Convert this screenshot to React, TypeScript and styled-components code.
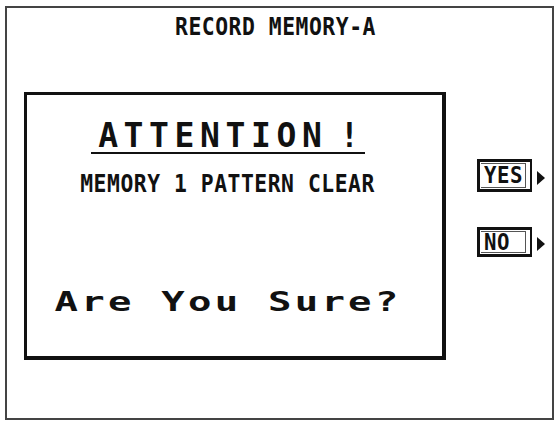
import React from "react";
import styled, { createGlobalStyle } from "styled-components";

const Global = createGlobalStyle`
body{
  margin:0;
  background:#fff;
}
`
const Screen = styled.div`
margin:6px 0 0 5px;
width:549px;
height:414px;
box-sizing:border-box;
border:2px solid #444;
display:flex;
flex-direction:column;
color:#111;
font-family:"DejaVu Sans Mono",monospace;
`
const Title = styled.div`
padding:7px 9px 0 0;
font-size:24px;
font-weight:700;
line-height:1;
letter-spacing:0.6px;
text-align:center;
transform:scaleX(0.89);
`
const Body = styled.div`
display:flex;
margin-top:53px;
padding-left:17px;
`
const Dialog = styled.div`
width:422px;
height:268px;
box-sizing:border-box;
border-style:solid;
border-color:#111;
border-width:3px 4px 4px 3px;
padding-right:13px;
display:flex;
flex-direction:column;
align-items:center;
`
const Heading = styled.div`
margin-top:24px;
padding-left:7px;
font-size:33px;
font-weight:700;
line-height:1;
letter-spacing:5.6px;
border-bottom:2px solid #111;
white-space:nowrap;
`
const Bang = styled.span`
margin-left:12px;
`
const Message = styled.div`
margin-top:18px;
font-size:24px;
font-weight:700;
line-height:1;
letter-spacing:0.6px;
white-space:nowrap;
transform:scaleX(0.89);
`
const Question = styled.div`
margin-top:93px;
font-size:26.5px;
font-weight:700;
line-height:1;
letter-spacing:2.2px;
white-space:nowrap;
transform:scaleX(1.47);
`
const Choices = styled.div`
display:flex;
flex-direction:column;
gap:35px;
padding-top:67px;
margin-left:31px;
`
const Choice = styled.div`
display:flex;
align-items:center;
gap:5px;
`
const Key = styled.div<{tall:boolean}>`
width:55px;
height:${props=>props.tall?33:30}px;
box-sizing:border-box;
border:3px solid #111;
border-right-width:2px;
box-shadow:inset 0 0 0 1px #fff, inset -3px 0 0 1px #fff, inset -3px 0 0 2px #555;
padding-left:4px;
display:flex;
align-items:center;
font-size:23px;
font-weight:700;
line-height:1;
`
const KeyText = styled.span`
display:inline-block;
letter-spacing:0.6px;
transform:scaleX(0.9);
transform-origin:left center;
`
const Arrow = styled.span`
width:0;
height:0;
margin-top:4px;
border-left:8px solid #111;
border-top:7px solid transparent;
border-bottom:7px solid transparent;
`

const App = () =>{
    const choices = [{name:'YES',tall:true},{name:'NO',tall:false}]
    return (
        <>
            <Global/>
            <Screen>
                <Title>RECORD MEMORY-A</Title>
                <Body>
                    <Dialog>
                        <Heading>ATTENTION<Bang>!</Bang></Heading>
                        <Message>MEMORY 1 PATTERN CLEAR</Message>
                        <Question>Are You Sure?</Question>
                    </Dialog>
                    <Choices>
                        {choices.map((item,i)=>
                            <Choice key={i}>
                                <Key tall={item.tall}><KeyText>{item.name}</KeyText></Key>
                                <Arrow/>
                            </Choice>
                        )}
                    </Choices>
                </Body>
            </Screen>
        </>
    )
}
export default App
